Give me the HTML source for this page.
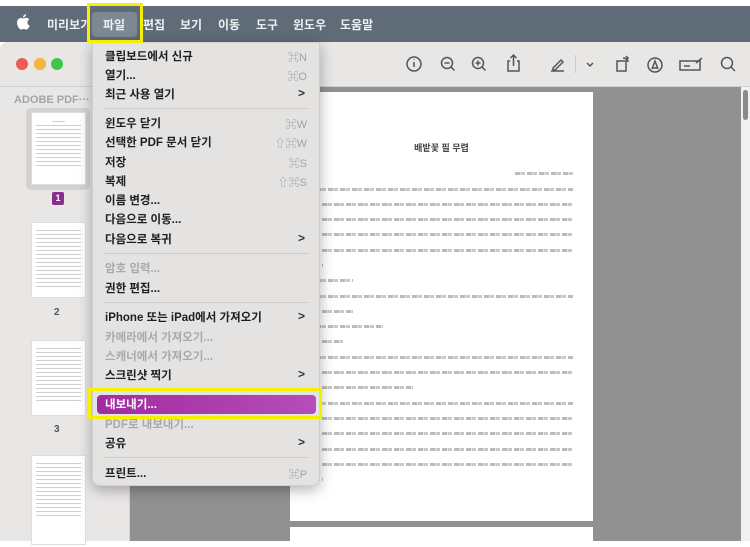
<!DOCTYPE html>
<html><head><meta charset="utf-8"><style>
*{margin:0;padding:0;box-sizing:border-box}
body{width:750px;height:541px;overflow:hidden;position:relative;background:#fff;font-family:"Liberation Sans","Noto Sans CJK KR",sans-serif}
.abs{position:absolute}
.mb{left:0;top:6px;width:750px;height:36px;background:#5f6b77}
.mb span{position:absolute;top:10px;color:#eef1f4;font-size:12px;font-weight:bold}
.win{left:0;top:42px;width:750px;height:499px;background:#919191;border-top-left-radius:8px}
.tb{left:0;top:42px;width:750px;height:45px;background:#e8e7e6;border-top-left-radius:8px;border-bottom:1px solid #cfcfcf}
.side{left:0;top:87px;width:130px;height:454px;background:#e9e7e6;border-right:1px solid #d2d2d2}
.thumb{position:absolute;background:#fff;border:1px solid #ddd}
.thumb i{display:block;height:1px;background:#d0d0d0;margin:3px 4px}
.menu{left:92px;top:42px;width:228px;height:444px;background:#e4e3e2;border-radius:0 0 8px 8px;box-shadow:0 4px 14px rgba(0,0,0,.3);border:1px solid #cfcfcf}
.mi{position:absolute;left:12px;font-size:11.5px;font-weight:bold;color:#1e1e1e}
.dis{color:#a9a9a9}
.sc{position:absolute;right:12px;font-size:11px;color:#a3a3a3}
.ar{position:absolute;right:14px;font-size:12px;font-weight:bold;color:#333}
.sep{position:absolute;left:10px;right:10px;height:1px;background:#cdcccb}
.page{background:#fff;left:290px;width:303px}
.ln{position:absolute;left:20px;right:20px;height:3px;background:repeating-linear-gradient(90deg,#aaa 0 5px,#ddd 5px 6px,#bbb 6px 10px,#fff 10px 12px);opacity:.8}
svg{position:absolute}
</style></head><body>
<div class="abs mb">
<div class="abs" style="left:92px;top:6px;width:45px;height:25px;background:#7d8893;border-radius:4px"></div>
<span style="left:47px">미리보기</span><span style="left:103px">파일</span><span style="left:143px">편집</span><span style="left:180px">보기</span><span style="left:218px">이동</span><span style="left:256px">도구</span><span style="left:293px">윈도우</span><span style="left:340px">도움말</span>
</div>
<svg style="left:16px;top:13px" width="14" height="18" viewBox="0 0 14 18"><path d="M10 1c0 2-1.5 3.5-3 3.5C7 3 8.5 1.3 10 1zM7 5.5c1 0 2-.7 3-.7 1.5 0 2.6.8 3.2 1.8-2.6 1.4-2.2 5 .5 6-.6 1.8-2 4-3.4 4-1 0-1.3-.6-2.6-.6s-1.7.6-2.700.6C3.5 16.6 1 13 1 9.8 1 7 2.8 5 4.8 5c1 0 1.7.5 2.2.5z" fill="#fff"/></svg>
<div class="abs win"></div>
<div class="abs tb"></div>
<div class="abs" style="left:16px;top:58px;width:12px;height:12px;border-radius:50%;background:#ee5b55"></div>
<div class="abs" style="left:34px;top:58px;width:12px;height:12px;border-radius:50%;background:#f5b53c"></div>
<div class="abs" style="left:51px;top:58px;width:12px;height:12px;border-radius:50%;background:#3ec54a"></div>
<svg style="left:400px;top:52px" width="345" height="26" viewBox="400 52 345 26" fill="none" stroke="#555" stroke-width="1.5">
<circle cx="414" cy="64" r="7"/><path d="M414 62v5M414 59.5v.5"/>
<circle cx="447" cy="63" r="5.5"/><path d="M451 67l3.5 3.5M444.5 63h5"/>
<circle cx="478" cy="63" r="5.5"/><path d="M482 67l3.5 3.5M475.5 63h5M478 60.5v5"/>
<path d="M510 61h-2v10h11V61h-2M513.5 66V55M510.5 58l3-3 3 3"/>
<path d="M551 71h13M553 68l8-8 2 2-8 8h-2z"/>
<path d="M587 63l3 3 3-3" />
<rect x="617" y="61" width="9" height="10"/><path d="M623 58c3 0 5 1 5 4M626 56l2 2-2 2"/>
<circle cx="655" cy="65" r="7"/><path d="M652 69l3-8 3 8M653 68h4"/>
<rect x="680" y="61" width="20" height="9"/><path d="M684 66h6M696 63l6-5"/>
<circle cx="727" cy="63" r="5.5"/><path d="M731 67l4 4"/>
</svg>
<div class="abs" style="left:575px;top:55px;width:1px;height:18px;background:#ccc"></div>
<div class="abs" style="left:741px;top:87px;width:9px;height:454px;background:#f0f0f0"></div>
<div class="abs" style="left:743px;top:90px;width:5px;height:30px;background:#8a8a8a;border-radius:3px"></div>
<div class="abs side">
<div class="abs" style="left:14px;top:7px;font-size:11px;font-weight:bold;color:#a5a5a5">ADOBE PDF···</div>
<div class="abs" style="left:26px;top:21px;width:64px;height:82px;background:#d3d2d1;border-radius:5px"></div>
<div class="thumb" style="left:31px;top:25px;width:55px;height:73px;padding-top:6px"><i style="margin:2px 20px"></i><i></i><i></i><i></i><i></i><i></i><i></i><i></i><i></i><i></i><i></i><i></i></div>
<div class="abs" style="left:52px;top:105px;width:12px;height:13px;background:#8a2d8f;border-radius:2px;color:#fff;font-size:9px;font-weight:bold;text-align:center;line-height:13px">1</div>
<div class="thumb" style="left:31px;top:135px;width:55px;height:76px;padding-top:4px"><i></i><i></i><i></i><i></i><i></i><i></i><i></i><i></i><i></i><i></i><i></i><i></i><i></i><i></i><i></i></div>
<div class="abs" style="left:54px;top:220px;font-size:10px;font-weight:bold;color:#555">2</div>
<div class="thumb" style="left:31px;top:253px;width:55px;height:76px;padding-top:4px"><i></i><i></i><i></i><i></i><i></i><i></i><i></i><i></i><i></i><i></i><i></i><i></i><i></i><i></i></div>
<div class="abs" style="left:54px;top:337px;font-size:10px;font-weight:bold;color:#555">3</div>
<div class="thumb" style="left:31px;top:368px;width:55px;height:90px;padding-top:4px"><i></i><i></i><i></i><i></i><i></i><i></i><i></i><i></i><i></i><i></i><i></i><i></i><i></i><i></i></div>
</div>
<div class="abs page" style="top:92px;height:429px">
<div class="abs" style="left:0;right:0;top:49px;text-align:center;font-size:9px;color:#444;font-weight:bold">배밭꽃 필 무렵</div>
<div class="ln" style="top:80px;left:225px"></div>
<div class="ln" style="top:96px;left:26px"></div><div class="ln" style="top:111px"></div><div class="ln" style="top:126px"></div><div class="ln" style="top:141px"></div><div class="ln" style="top:157px"></div><div class="ln" style="top:172px;right:270px"></div>
<div class="ln" style="top:187px;left:26px;right:240px"></div>
<div class="ln" style="top:203px;left:26px"></div><div class="ln" style="top:218px;right:240px"></div>
<div class="ln" style="top:233px;left:26px;right:210px"></div><div class="ln" style="top:248px;right:250px"></div>
<div class="ln" style="top:264px;left:26px"></div><div class="ln" style="top:279px"></div><div class="ln" style="top:294px;right:180px"></div>
<div class="ln" style="top:310px;left:26px"></div><div class="ln" style="top:325px"></div><div class="ln" style="top:340px"></div><div class="ln" style="top:356px"></div><div class="ln" style="top:371px"></div><div class="ln" style="top:386px;right:270px"></div>
</div>
<div class="abs page" style="top:527px;height:20px"></div>
<div class="abs menu">
<div class="mi" style="top:5px">클립보드에서 신규</div><div class="sc" style="top:6px">⌘N</div>
<div class="mi" style="top:24px">열기...</div><div class="sc" style="top:25px">⌘O</div>
<div class="mi" style="top:43px">최근 사용 열기</div><div class="ar" style="top:43px">&gt;</div>
<div class="sep" style="top:65px"></div>
<div class="mi" style="top:72px">윈도우 닫기</div><div class="sc" style="top:73px">⌘W</div>
<div class="mi" style="top:91px">선택한 PDF 문서 닫기</div><div class="sc" style="top:92px">⇧⌘W</div>
<div class="mi" style="top:111px">저장</div><div class="sc" style="top:112px">⌘S</div>
<div class="mi" style="top:130px">복제</div><div class="sc" style="top:131px">⇧⌘S</div>
<div class="mi" style="top:149px">이름 변경...</div>
<div class="mi" style="top:168px">다음으로 이동...</div>
<div class="mi" style="top:188px">다음으로 복귀</div><div class="ar" style="top:188px">&gt;</div>
<div class="sep" style="top:210px"></div>
<div class="mi dis" style="top:217px">암호 입력...</div>
<div class="mi" style="top:237px">권한 편집...</div>
<div class="sep" style="top:259px"></div>
<div class="mi" style="top:266px">iPhone 또는 iPad에서 가져오기</div><div class="ar" style="top:266px">&gt;</div>
<div class="mi dis" style="top:286px">카메라에서 가져오기...</div>
<div class="mi dis" style="top:305px">스캐너에서 가져오기...</div>
<div class="mi" style="top:324px">스크린샷 찍기</div><div class="ar" style="top:324px">&gt;</div>
<div class="abs" style="left:4px;top:352px;width:219px;height:19px;background:linear-gradient(90deg,#a12c9f,#b54dbb);border-radius:4px"></div>
<div class="mi" style="top:353px;color:#fff">내보내기...</div>
<div class="mi dis" style="top:373px">PDF로 내보내기...</div>
<div class="mi" style="top:392px">공유</div><div class="ar" style="top:392px">&gt;</div>
<div class="sep" style="top:414px"></div>
<div class="mi" style="top:422px">프린트...</div><div class="sc" style="top:423px">⌘P</div>
</div>
<div class="abs" style="left:87px;top:3px;width:56px;height:40px;border:3px solid #f4f000"></div>
<div class="abs" style="left:88px;top:388px;width:234px;height:31px;border:3px solid #f4f000"></div>
</body></html>
